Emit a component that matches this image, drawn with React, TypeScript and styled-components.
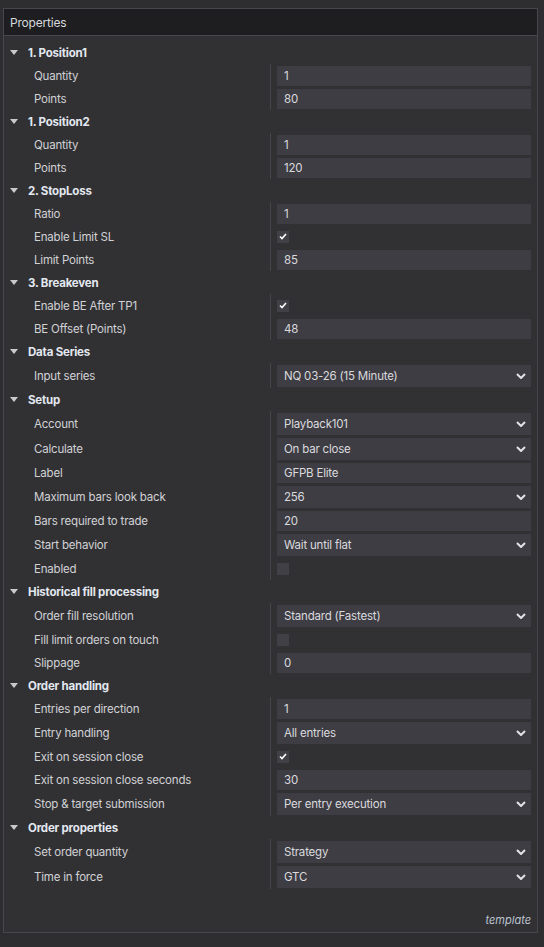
import React from "react";
import styled, { createGlobalStyle } from "styled-components";

const GlobalStyle = createGlobalStyle`
  html, body {
    margin: 0;
    padding: 0;
    background: #2e2e31;
  }
  body {
    font-family: Inter, "Open Sans", "Liberation Sans", sans-serif;
    -webkit-font-smoothing: antialiased;
  }
`;

type Kind = "input" | "select" | "check";
interface RowData {
  label: string;
  kind: Kind;
  value?: string;
  checked?: boolean;
}
interface GroupData {
  title: string;
  rows: RowData[];
}

const groups: GroupData[] = [
  {
    title: "1. Position1",
    rows: [
      { label: "Quantity", kind: "input", value: "1" },
      { label: "Points", kind: "input", value: "80" },
    ],
  },
  {
    title: "1. Position2",
    rows: [
      { label: "Quantity", kind: "input", value: "1" },
      { label: "Points", kind: "input", value: "120" },
    ],
  },
  {
    title: "2. StopLoss",
    rows: [
      { label: "Ratio", kind: "input", value: "1" },
      { label: "Enable Limit SL", kind: "check", checked: true },
      { label: "Limit Points", kind: "input", value: "85" },
    ],
  },
  {
    title: "3. Breakeven",
    rows: [
      { label: "Enable BE After TP1", kind: "check", checked: true },
      { label: "BE Offset (Points)", kind: "input", value: "48" },
    ],
  },
  {
    title: "Data Series",
    rows: [{ label: "Input series", kind: "select", value: "NQ 03-26 (15 Minute)" }],
  },
  {
    title: "Setup",
    rows: [
      { label: "Account", kind: "select", value: "Playback101" },
      { label: "Calculate", kind: "select", value: "On bar close" },
      { label: "Label", kind: "input", value: "GFPB Elite" },
      { label: "Maximum bars look back", kind: "select", value: "256" },
      { label: "Bars required to trade", kind: "input", value: "20" },
      { label: "Start behavior", kind: "select", value: "Wait until flat" },
      { label: "Enabled", kind: "check", checked: false },
    ],
  },
  {
    title: "Historical fill processing",
    rows: [
      { label: "Order fill resolution", kind: "select", value: "Standard (Fastest)" },
      { label: "Fill limit orders on touch", kind: "check", checked: false },
      { label: "Slippage", kind: "input", value: "0" },
    ],
  },
  {
    title: "Order handling",
    rows: [
      { label: "Entries per direction", kind: "input", value: "1" },
      { label: "Entry handling", kind: "select", value: "All entries" },
      { label: "Exit on session close", kind: "check", checked: true },
      { label: "Exit on session close seconds", kind: "input", value: "30" },
      { label: "Stop & target submission", kind: "select", value: "Per entry execution" },
    ],
  },
  {
    title: "Order properties",
    rows: [
      { label: "Set order quantity", kind: "select", value: "Strategy" },
      { label: "Time in force", kind: "select", value: "GTC" },
    ],
  },
];

const Page = styled.div`
  padding: 8px 6px 14px 3px;
`;

const Panel = styled.div`
  border: 1px solid #46464b;
  background: #313134;
`;

const PanelHeader = styled.div`
  height: 26px;
  display: flex;
  align-items: center;
  padding-left: 6px;
  background: #1e1e20;
  border-bottom: 1px solid #46464b;
  color: #d6d9de;
  font-size: 12px;
  letter-spacing: -0.2px;
`;

const Body = styled.div`
  padding-top: 5px;
`;

const GroupHeader = styled.div`
  height: 23px;
  display: flex;
  align-items: center;
  padding-left: 6px;
  gap: 10px;
`;

const Caret = styled.span`
  width: 0;
  height: 0;
  border-left: 4px solid transparent;
  border-right: 4px solid transparent;
  border-top: 5px solid #c9c9cc;
`;

const GroupTitle = styled.span`
  color: #e3e8f0;
  font-size: 11.5px;
  font-weight: 700;
  letter-spacing: -0.2px;
`;

const Row = styled.div<{ $tall: boolean }>`
  display: grid;
  grid-template-columns: 266px 1fr;
  height: ${(p) => (p.$tall ? 25 : 23)}px;
`;

const Label = styled.div`
  display: flex;
  align-items: center;
  padding-left: 30px;
  color: #d2d2d4;
  font-size: 11.5px;
  letter-spacing: -0.2px;
  white-space: nowrap;
`;

const ValueCell = styled.div`
  display: flex;
  align-items: center;
  border-left: 1px solid #46464a;
  padding: 0 6px;
`;

const TextBox = styled.div`
  flex: 1;
  height: 20px;
  display: flex;
  align-items: center;
  padding-left: 7px;
  background: #3e3d44;
  color: #dadadd;
  font-size: 11.5px;
  letter-spacing: -0.2px;
`;

const SelectBox = styled(TextBox)`
  height: 22px;
  justify-content: space-between;
  padding-right: 5px;
`;

const CheckBox = styled.div`
  width: 12px;
  height: 12px;
  background: #414047;
  display: flex;
  align-items: center;
  justify-content: center;
`;

const Footer = styled.div`
  height: 43px;
  display: flex;
  justify-content: flex-end;
  align-items: flex-end;
  padding: 0 6px 5px 0;
  box-sizing: border-box;
`;

const TemplateTag = styled.span`
  color: #bcc3cf;
  font-size: 11px;
  font-style: italic;
`;

const Chevron = () => (
  <svg width="10" height="6" viewBox="0 0 10 6">
    <polyline points="1,1 5,5 9,1" fill="none" stroke="#e4e4e6" strokeWidth="2" />
  </svg>
);

const Check = () => (
  <svg width="8" height="7" viewBox="0 0 8 7">
    <polyline points="1,3.5 3,5.5 7,1" fill="none" stroke="#ffffff" strokeWidth="1.6" />
  </svg>
);

const Value = ({ row }: { row: RowData }) => {
  if (row.kind === "check") return <CheckBox>{row.checked && <Check />}</CheckBox>;
  if (row.kind === "select")
    return (
      <SelectBox>
        <span>{row.value}</span>
        <Chevron />
      </SelectBox>
    );
  return <TextBox>{row.value}</TextBox>;
};

export default function App() {
  return (
    <>
      <GlobalStyle />
      <Page>
        <Panel>
          <PanelHeader>Properties</PanelHeader>
          <Body>
            {groups.map((g) => (
              <div key={g.title}>
                <GroupHeader>
                  <Caret />
                  <GroupTitle>{g.title}</GroupTitle>
                </GroupHeader>
                {g.rows.map((r) => (
                  <Row key={r.label} $tall={r.kind === "select"}>
                    <Label>{r.label}</Label>
                    <ValueCell>
                      <Value row={r} />
                    </ValueCell>
                  </Row>
                ))}
              </div>
            ))}
          </Body>
          <Footer>
            <TemplateTag>template</TemplateTag>
          </Footer>
        </Panel>
      </Page>
    </>
  );
}
